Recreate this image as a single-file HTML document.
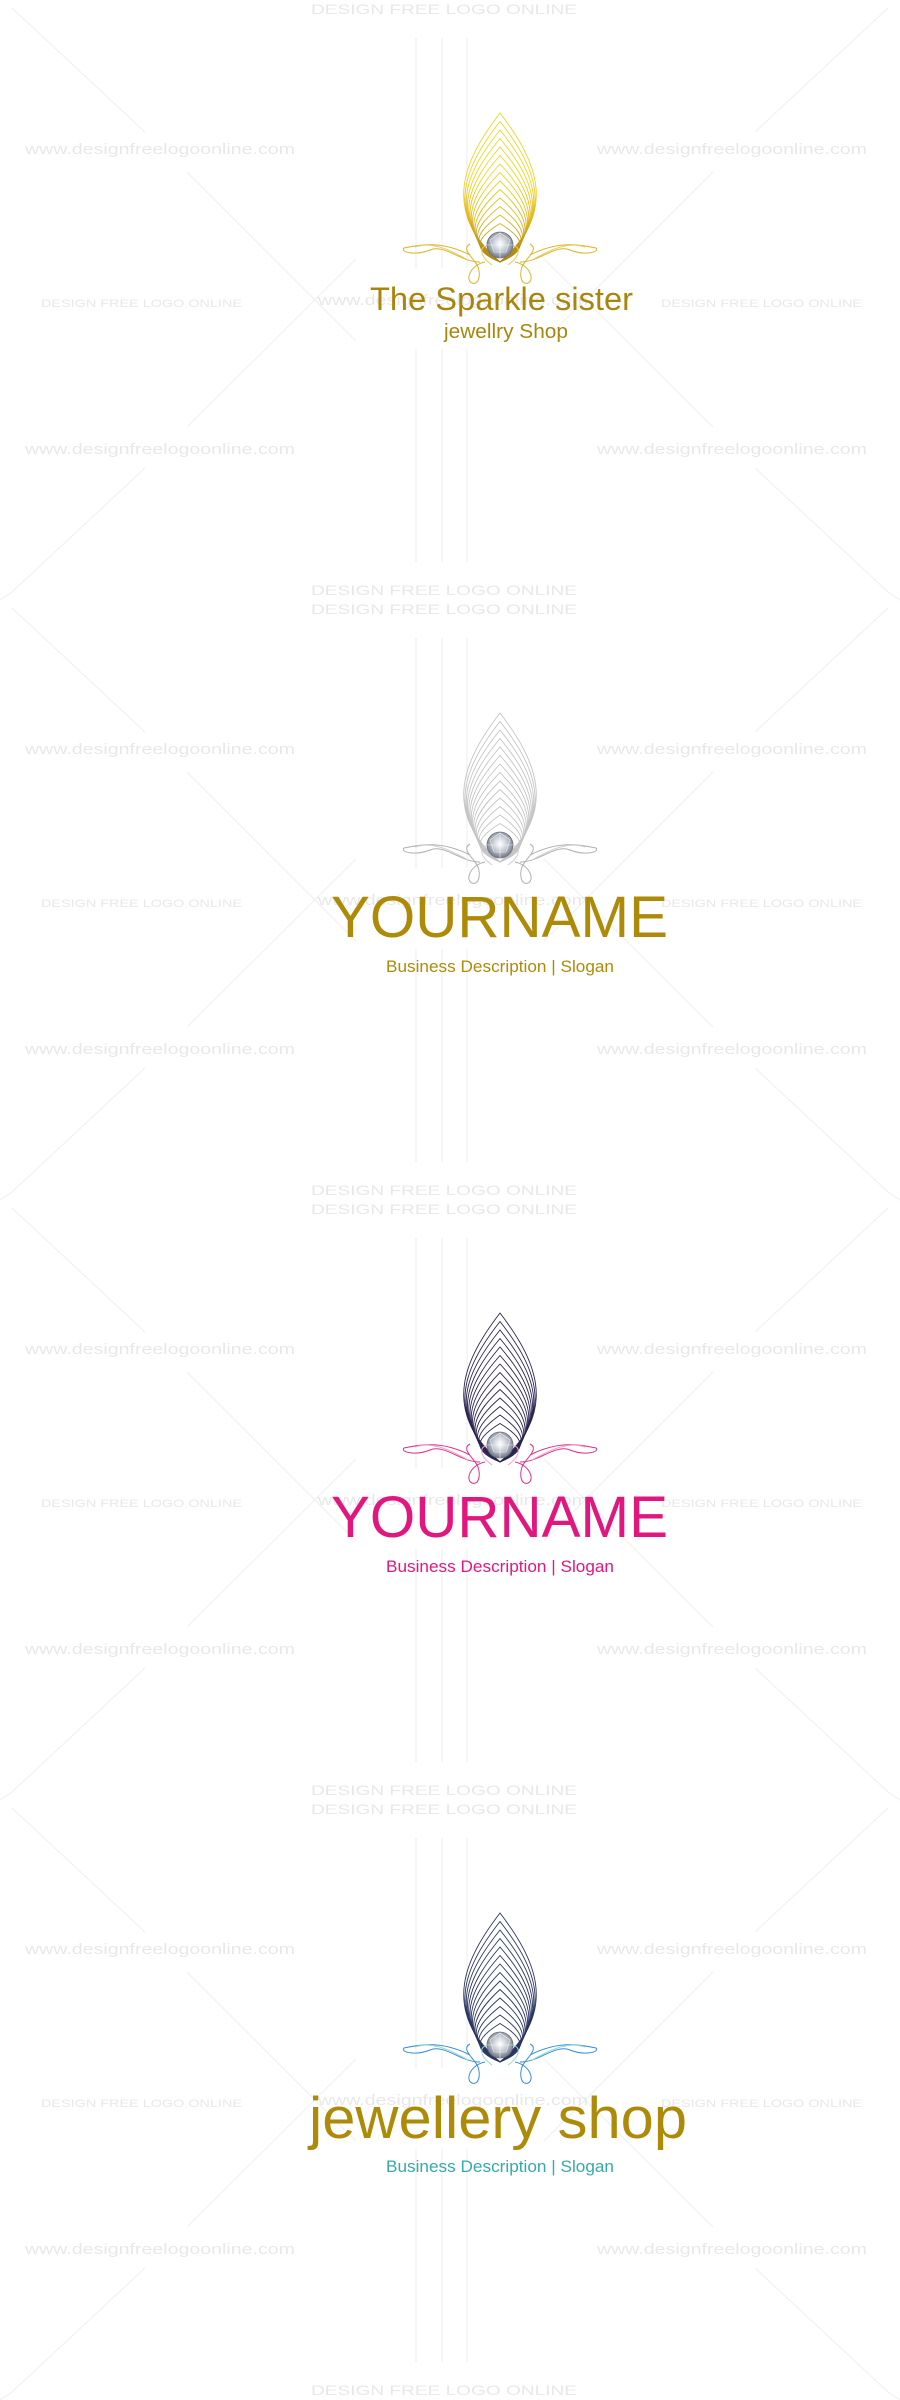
<!DOCTYPE html>
<html><head><meta charset="utf-8">
<style>
html,body{margin:0;padding:0;background:#fff;}
svg{display:block;}
</style></head>
<body>
<svg id="s" width="900" height="2400" viewBox="0 0 900 2400" xmlns="http://www.w3.org/2000/svg">
<defs>
<radialGradient id="gem" cx="50%" cy="45%" r="55%">
<stop offset="0" stop-color="#ffffff"/><stop offset="0.5" stop-color="#c9ced6"/><stop offset="1" stop-color="#6f7784"/>
</radialGradient>
</defs>
</svg>
<script>
var s=document.getElementById('s');
var out='';
var blocks=[
 {top:'#f2d420',mid:'#e0b820',bot:'#a8800e',sw1:'#d9b52a',sw2:'#e8cc5a',tc:'#a8860d',sc:'#a8860d',mode:1},
 {top:'#c4c4c4',mid:'#cfcfcf',bot:'#a8a8a8',sw1:'#b0b0b0',sw2:'#cfcfcf',tc:'#ae8a09',sc:'#ae8a09',mode:2},
 {top:'#2a2550',mid:'#e0409a',bot:'#2a2550',outer:'#e0409a',sw1:'#e0308a',sw2:'#f4a0c8',tc:'#e0177f',sc:'#e0177f',mode:2},
 {top:'#2a3560',mid:'#3c8ed0',bot:'#70d4d0',outer:'#4a9ad8',sw1:'#3a8ed8',sw2:'#8fdcd4',tc:'#ae8a09',sc:'#35aaa8',mode:3}
];
var defs='';
var wm='#e8e8e8';
for(var b=0;b<4;b++){
 var o=b*600, B=blocks[b];
 defs+='<linearGradient id="g'+b+'" gradientUnits="userSpaceOnUse" x1="0" y1="'+(113+o)+'" x2="0" y2="'+(262+o)+'"><stop offset="0" stop-color="'+B.top+'"/><stop offset="0.45" stop-color="'+B.top+'"/><stop offset="0.7" stop-color="'+B.mid+'"/><stop offset="1" stop-color="'+B.bot+'"/></linearGradient>';
 if(B.outer) defs+='<linearGradient id="h'+b+'" gradientUnits="userSpaceOnUse" x1="0" y1="'+(113+o)+'" x2="0" y2="'+(262+o)+'"><stop offset="0" stop-color="'+B.top+'"/><stop offset="0.3" stop-color="'+B.outer+'"/><stop offset="0.85" stop-color="'+B.outer+'"/><stop offset="1" stop-color="'+B.bot+'"/></linearGradient>';
 out+='<g transform="translate(0,'+o+')">';
 var L=[[12,8,145,132],[187,172,356,341],[356,259,187,427],[145,468,12,592],[0,600,12,592]];
 L.forEach(function(l){out+='<line x1="'+l[0]+'" y1="'+l[1]+'" x2="'+l[2]+'" y2="'+l[3]+'" stroke="#efefef" stroke-width="1"/>';
  out+='<line x1="'+(900-l[0])+'" y1="'+l[1]+'" x2="'+(900-l[2])+'" y2="'+l[3]+'" stroke="#efefef" stroke-width="1"/>';});
 [416,442,467].forEach(function(x){out+='<line x1="'+x+'" y1="38" x2="'+x+'" y2="268" stroke="#ececec"/><line x1="'+x+'" y1="349" x2="'+x+'" y2="562" stroke="#ececec"/>';});
 var ff='font-family="Liberation Sans, sans-serif"';
 out+='<text x="311" y="14" '+ff+' font-size="14" fill="'+wm+'" textLength="266" lengthAdjust="spacingAndGlyphs">DESIGN FREE LOGO ONLINE</text>';
 [[25,154],[597,154],[25,454],[597,454],[318,305]].forEach(function(p){out+='<text x="'+p[0]+'" y="'+p[1]+'" '+ff+' font-size="15" fill="'+wm+'" textLength="270" lengthAdjust="spacingAndGlyphs">www.designfreelogoonline.com</text>';});
 [[41,307],[661,307]].forEach(function(p){out+='<text x="'+p[0]+'" y="'+p[1]+'" '+ff+' font-size="11" fill="'+wm+'" textLength="201" lengthAdjust="spacingAndGlyphs">DESIGN FREE LOGO ONLINE</text>';});
 out+='<text x="311" y="595" '+ff+' font-size="14" fill="'+wm+'" textLength="266" lengthAdjust="spacingAndGlyphs">DESIGN FREE LOGO ONLINE</text>';
 for(var i=0;i<14;i++){
  var k=i/13, T=113+i*8.5, h=262-T, w=38*(1-k*0.45);
  var d='M500,262 C'+(500-w*1.6)+','+(262-h*0.35)+' '+(500-w*0.9)+','+(T+h*0.3)+' 500,'+T+' C'+(500+w*0.9)+','+(T+h*0.3)+' '+(500+w*1.6)+','+(262-h*0.35)+' 500,262';
  var st=(B.outer && i<6)?'url(#h'+b+')':'url(#g'+b+')';
  out+='<path d="'+d+'" fill="none" stroke="'+st+'" stroke-width="0.9"/>';
 }
 [1,-1].forEach(function(sg){
  function X(x){return 500+sg*(x-500);}
  out+='<path d="M'+X(470)+',255 C'+X(440)+',240 '+X(420)+',245 '+X(404)+',248 C'+X(400)+',252 '+X(415)+',256 '+X(430)+',250 C'+X(445)+',244 '+X(460)+',262 '+X(480)+',262" fill="none" stroke="'+B.sw1+'" stroke-width="1"/>';
  out+='<path d="M'+X(415)+',247 C'+X(430)+',242 '+X(445)+',247 '+X(468)+',260" fill="none" stroke="'+B.sw2+'" stroke-width="1"/>';
  out+='<path d="M'+X(485)+',262 C'+X(470)+',265 '+X(465)+',280 '+X(472)+',283 C'+X(480)+',286 '+X(482)+',270 '+X(475)+',262 C'+X(470)+',255 '+X(462)+',248 '+X(470)+',244" fill="none" stroke="'+B.sw1+'" stroke-width="1"/>';
  out+='<path d="M'+X(492)+',265 C'+X(478)+',255 '+X(480)+',245 '+X(488)+',246" fill="none" stroke="'+B.sw2+'" stroke-width="1"/>';
 });
 out+='<circle cx="500" cy="245" r="13" fill="url(#gem)" stroke="#6d7480" stroke-width="0.8"/>';
 out+='<path d="M490,240 L500,233 L510,240 L506,252 L494,252 Z M500,233 L500,258 M487,245 L513,245" fill="none" stroke="#ffffff" stroke-width="0.6" opacity="0.8"/>';
 if(B.mode==1){
  out+='<text x="370" y="310" '+ff+' font-size="32" fill="'+B.tc+'" textLength="263" lengthAdjust="spacingAndGlyphs">The Sparkle sister</text>';
  out+='<text x="444" y="338" '+ff+' font-size="20" fill="'+B.tc+'" textLength="124" lengthAdjust="spacingAndGlyphs">jewellry Shop</text>';
 } else if(B.mode==2){
  out+='<text x="331" y="337" '+ff+' font-size="58" fill="'+B.tc+'" textLength="337" lengthAdjust="spacingAndGlyphs">YOURNAME</text>';
  out+='<text x="386" y="372" '+ff+' font-size="17" fill="'+B.sc+'" textLength="228" lengthAdjust="spacingAndGlyphs">Business Description | Slogan</text>';
 } else {
  out+='<text x="309" y="338" '+ff+' font-size="58" fill="'+B.tc+'" textLength="378" lengthAdjust="spacingAndGlyphs">jewellery shop</text>';
  out+='<text x="386" y="372" '+ff+' font-size="17" fill="'+B.sc+'" textLength="228" lengthAdjust="spacingAndGlyphs">Business Description | Slogan</text>';
 }
 out+='</g>';
}
s.querySelector('defs').insertAdjacentHTML('beforeend',defs);
s.insertAdjacentHTML('beforeend',out);
</script>
</body></html>
